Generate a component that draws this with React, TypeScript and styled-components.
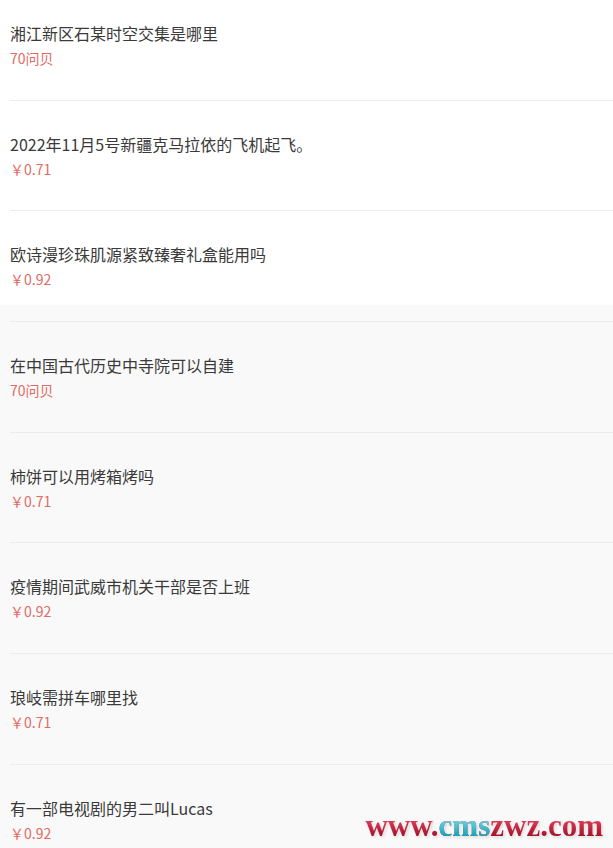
import * as React from "react";
import styled, { createGlobalStyle } from "styled-components";

type Question = {
  title: string;
  price: string;
};

const questions: Question[] = [
  { title: "湘江新区石某时空交集是哪里", price: "70问贝" },
  { title: "2022年11月5号新疆克马拉依的飞机起飞。", price: "￥0.71" },
  { title: "欧诗漫珍珠肌源紧致臻奢礼盒能用吗", price: "￥0.92" },
  { title: "在中国古代历史中寺院可以自建", price: "70问贝" },
  { title: "柿饼可以用烤箱烤吗", price: "￥0.71" },
  { title: "疫情期间武威市机关干部是否上班", price: "￥0.92" },
  { title: "琅岐需拼车哪里找", price: "￥0.71" },
  { title: "有一部电视剧的男二叫Lucas", price: "￥0.92" },
];

const App: React.FC = () => {
  return (
    <Page>
      <GlobalStyle />
      <List>
        {questions.map((q, i) => (
          <Item key={i}>
            <Title>{q.title}</Title>
            <Price>{q.price}</Price>
          </Item>
        ))}
      </List>
      <Watermark>
        www.<Cyan>cms</Cyan>zwz.com
      </Watermark>
    </Page>
  );
};

const GlobalStyle = createGlobalStyle`
  html, body {
    margin: 0;
    padding: 0;
    background: #f9f9f9;
  }
  body {
    font-family: "Microsoft YaHei", "Noto Sans CJK SC", "Noto Sans", sans-serif;
  }
`;

const Page = styled.div`
  position: relative;
  width: 100%;
  height: 848px;
  overflow: hidden;
  background: linear-gradient(#ffffff 0 305px, #f9f9f9 305px);
`;

const List = styled.ul`
  list-style: none;
  margin: -10px 0 0;
  padding: 0;
`;

const Item = styled.li`
  margin-left: 10px;
  padding: 31px 0 31.67px;
  border-bottom: 1px solid #ececec;
`;

const Title = styled.div`
  font-size: 16px;
  line-height: 24px;
  color: #3a3a3a;
  white-space: nowrap;
`;

const Price = styled.div`
  margin-top: 3px;
  font-size: 14px;
  line-height: 20px;
  color: #e26a63;
`;

const Watermark = styled.div`
  position: absolute;
  right: 10px;
  bottom: 4px;
  font-family: "Liberation Serif", "DejaVu Serif", serif;
  font-weight: bold;
  font-size: 31px;
  line-height: 36px;
  color: #b81030;
  background: linear-gradient(#ee4a64 20%, #9c0a24 85%);
  -webkit-background-clip: text;
  background-clip: text;
  -webkit-text-fill-color: transparent;
  filter: drop-shadow(0 0 1px #ffffff) drop-shadow(1px 1px 1px rgba(0, 0, 0, 0.15));
`;

const Cyan = styled.span`
  background: linear-gradient(#7fe6ef 20%, #0c9db4 85%);
  -webkit-background-clip: text;
  background-clip: text;
  -webkit-text-fill-color: transparent;
`;

export default App;
